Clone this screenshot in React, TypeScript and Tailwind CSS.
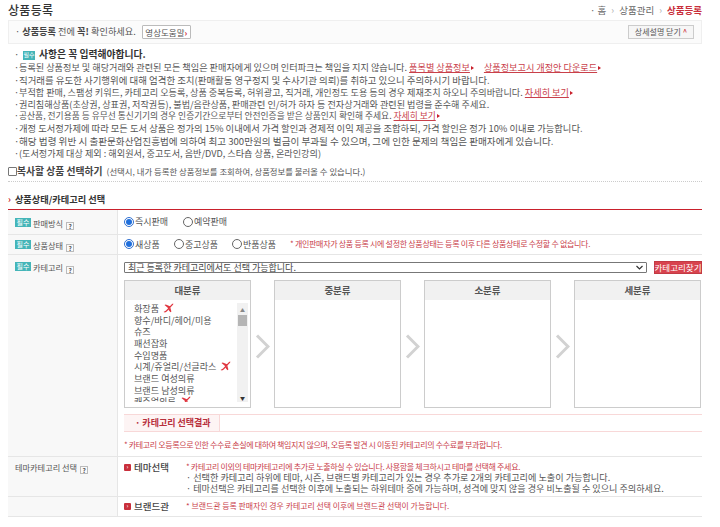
import React from 'react';

const FONT = "font-['Noto_Sans_CJK_KR','Noto_Sans',sans-serif]";

function Badge() {
    return <span className="inline-flex items-center justify-center w-[16px] h-[9px] mt-[0.5px] bg-[#45b5b8] text-white text-[7px] leading-none shrink-0">필수</span>;
}

function Help() {
    return <span className="inline-flex items-center justify-center w-[8px] h-[8px] border border-[#bbb] bg-[#fafafa] text-[6.5px] font-bold leading-none text-[#555] shrink-0">?</span>;
}

function Plane() {
    return (
        <svg width="11" height="10" viewBox="0 0 11 10" className="inline-block ml-[4px] align-[-1px]">
            <path d="M0.5 9 L3 7.5 L8.5 1.5 Q10 0.3 10.3 0.7 Q10.6 1.2 9.3 2.6 L3.8 8.4 L2 9.6 Z" fill="#e0353f" />
            <path d="M1.5 2 L2.8 1.6 L7.5 3.5 L5.6 5.6 Z M5.2 6.6 L7.3 4.6 L8.4 8.6 L7.4 9.2 Z" fill="#e0353f" />
        </svg>
    );
}

function Chevron() {
    return (
        <div className="w-[23px] flex justify-center shrink-0 mt-[5px]">
            <svg width="15" height="25" viewBox="0 0 15 25">
                <path d="M2 1.5 L13 12.5 L2 23.5" fill="none" stroke="#d2d2d2" strokeWidth="3" />
            </svg>
        </div>
    );
}

function Link({ children }: { children: React.ReactNode }) {
    return (
        <span className="text-[#c9404a] underline">
            {children}
            <span className="inline-block ml-[1px] w-0 h-0 border-y-[2.5px] border-y-transparent border-l-[3px] border-l-[#c9202c] align-[1px]" />
        </span>
    );
}

function RowLabel({ children, required, top }: { children: React.ReactNode; required?: boolean; top: string }) {
    return (
        <div className={`w-[110px] shrink-0 bg-[#f8f8f8] border-r border-[#e6e6e6] pl-[7px] flex items-start gap-[2px] text-[#555] text-[8.2px] ${top}`}>
            {required && <Badge />}
            <span className="leading-[10px] mr-[1px] whitespace-nowrap">{children}</span>
            <span className="mt-[1px]"><Help /></span>
        </div>
    );
}

function Radio({ label, checked, width }: { label: string; checked?: boolean; width: string }) {
    return (
        <span className={`inline-flex items-center gap-[1px] ${width}`}>
            <span className={`w-[10px] h-[10px] rounded-full border flex items-center justify-center ${checked ? 'border-[#2f6fd0]' : 'border-[#666]'}`}>
                {checked && <span className="w-[6px] h-[6px] rounded-full bg-[#1f6fdc]" />}
            </span>
            <span className="text-[#555] text-[9px]">{label}</span>
        </span>
    );
}

function CategoryBox({ title, items }: { title: string; items?: React.ReactNode[] }) {
    return (
        <div className="w-[127px] h-[128px] shrink-0 border border-[#ccc] flex flex-col">
            <div className="h-[19px] shrink-0 bg-[#f1f1f1] flex items-center justify-center font-bold text-[#555]">{title}</div>
            {items && (
                <div className="flex-1 flex min-h-0 pt-[3px] pb-[5px] pl-[9px] pr-[2px]">
                    <div className="flex-1 overflow-hidden text-[9.1px]">
                        {items.map((item, i) => (
                            <div key={i} className="h-[11.7px] leading-[11.7px] whitespace-nowrap text-[#555]">{item}</div>
                        ))}
                    </div>
                    <div className="w-[11px] bg-[#f1f1f1] flex flex-col items-center">
                        <span className="h-[7px] mt-[3px] text-[5px] leading-[7px] text-[#888]">▲</span>
                        <div className="w-[9px] h-[11px] mt-[2px] bg-[#b5b5b5]" />
                        <span className="mt-auto h-[9px] text-[5px] leading-[9px] text-[#333]">▼</span>
                    </div>
                </div>
            )}
        </div>
    );
}

const NOTICES: { size: string; body: React.ReactNode }[] = [
    { size: 'text-[9.15px]', body: <>등록된 상품정보 및 해당거래와 관련된 모든 책임은 판매자에게 있으며 인터파크는 책임을 지지 않습니다. <Link>품목별 상품정보</Link><span className="inline-block w-[10px]" /><Link>상품정보고시 개정안 다운로드</Link></> },
    { size: 'text-[9.45px]', body: <>직거래를 유도한 사기행위에 대해 엄격한 조치(판매활동 영구정지 및 수사기관 의뢰)를 취하고 있으니 주의하시기 바랍니다.</> },
    { size: 'text-[9.15px]', body: <>부적합 판매, 스팸성 키워드, 카테고리 오등록, 상품 중복등록, 허위광고, 직거래, 개인정도 도용 등의 경우 제재조치 하오니 주의바랍니다. <Link>자세히 보기</Link></> },
    { size: 'text-[9.15px]', body: <>권리침해상품(초상권, 상표권, 저작권등), 불법/음란상품, 판매관련 인/허가 하자 등 전자상거래와 관련된 법령을 준수해 주세요.</> },
    { size: 'text-[8.75px]', body: <>공산품, 전기용품 등 유무선 통신기기의 경우 인증기간으로부터 안전인증을 받은 상품인지 확인해 주세요. <Link>자세히 보기</Link></> },
    { size: 'text-[9.3px]', body: <>개정 도서정가제에 따라 모든 도서 상품은 정가의 15% 이내에서 가격 할인과 경제적 이익 제공을 조합하되, 가격 할인은 정가 10% 이내로 가능합니다.</> },
    { size: 'text-[9.6px]', body: <>해당 법령 위반 시 출판문화산업진흥법에 의하여 최고 300만원의 벌금이 부과될 수 있으며, 그에 인한 문제의 책임은 판매자에게 있습니다.</> },
    { size: 'text-[9.15px]', body: <>(도서정가제 대상 제외 : 해외원서, 중고도서, 음반/DVD, 스타숍 상품, 온라인강의)</> },
];

const CATEGORIES: React.ReactNode[] = [
    <>화장품<Plane /></>,
    '향수/바디/헤어/미용',
    '슈즈',
    '패션잡화',
    '수입명품',
    <>시계/쥬얼리/선글라스<Plane /></>,
    '브랜드 여성의류',
    '브랜드 남성의류',
    <>캐주얼의류<Plane /></>,
];

function ThemeTitle({ children }: { children: React.ReactNode }) {
    return (
        <div className="w-[62px] shrink-0 flex items-center gap-[3px] h-[11px] font-medium text-[#444] text-[9.5px]">
            <span className="w-[7px] h-[7px] bg-[#c9303c] rounded-[1px] flex items-center justify-center text-white text-[6px] leading-none">›</span>
            {children}
        </div>
    );
}

export default function App() {
    return (
        <div className={`${FONT} w-[720px] h-[527px] overflow-hidden bg-white text-[9.5px] text-[#555] pl-[8px] pr-[18px]`}>
            <div className="h-[20px] flex items-center justify-between">
                <h1 className="text-[12px] font-medium text-[#333] tracking-[0.3px]">상품등록</h1>
                <div className="flex items-center gap-[5px] text-[#666] mt-[1px]">
                    <span>· 홈</span>
                    <span className="text-[#aaa]">›</span>
                    <span>상품관리</span>
                    <span className="text-[#aaa]">›</span>
                    <span className="font-bold text-[#c9303c]">상품등록</span>
                </div>
            </div>

            <div className="h-[24px] bg-[#fbfbfb] border border-[#efefef] flex items-center justify-between pl-[6px] pr-[7px] text-[9.2px]">
                <div className="flex items-center">
                    <span>·&nbsp;</span>
                    <b className="text-[#444]">상품등록</b>
                    <span>&nbsp;전에&nbsp;</span>
                    <b className="text-[#444]">꼭!</b>
                    <span>&nbsp;확인하세요.</span>
                    <span className="ml-[6px] h-[14px] w-[49px] border border-[#bbb] rounded-[1px] bg-white flex items-center justify-center text-[8.5px]">
                        영상도움말<b className="text-[#c9202c]">›</b>
                    </span>
                </div>
                <span className="h-[14px] w-[66px] border border-[#ccc] bg-[#f6f6f6] flex items-center justify-center text-[8px]">상세설명 닫기 <span className="ml-[2px] text-[#c9202c]">^</span></span>
            </div>

            <div className="pt-[5px] pl-[6px]">
                <div className="h-[12.4px] flex items-center leading-none">
                    <span className="w-[9px]">·</span>
                    <span className="inline-flex items-center justify-center w-[12px] h-[9px] bg-[#45b5b8] text-white text-[6px] leading-none">필수</span>
                    <b className="ml-[4px] text-[#333] text-[9.8px]">사항은 꼭 입력해야합니다.</b>
                </div>
                {NOTICES.map((notice, i) => (
                    <div key={i} className={`h-[12.2px] leading-[12.2px] whitespace-nowrap ${notice.size}`}>
                        <span className="inline-block w-[5px]">·</span>{notice.body}
                    </div>
                ))}
            </div>

            <div className="mt-[5px] h-[15px] flex items-center border-b border-dotted border-[#ccc] pb-[2px] box-content">
                <span className="w-[9px] h-[9px] border border-[#777] rounded-[1px] bg-white shrink-0" />
                <b className="text-[#444] text-[9.8px]">복사할 상품 선택하기</b>
                <span className="ml-[4px] text-[8.4px]">(선택시, 내가 등록한 상품정보를 조회하여, 상품정보를 불러올 수 있습니다.)</span>
            </div>

            <div className="h-[18px] flex items-center text-[#333] font-bold text-[9.2px] border-b border-[#c9202c] mt-[9px] box-content">
                <span className="text-[#c9202c] mr-[4px] text-[9px] leading-none">›</span>상품상태/카테고리 선택
            </div>

            <div className="flex h-[25px] border-b border-[#e6e6e6]">
                <RowLabel required top="pt-[8px]">판매방식</RowLabel>
                <div className="flex items-center pl-[6px]">
                    <Radio label="즉시판매" checked width="w-[59px]" />
                    <Radio label="예약판매" width="w-[60px]" />
                </div>
            </div>

            <div className="flex h-[20px] border-b border-[#e6e6e6]">
                <RowLabel required top="pt-[5px]">상품상태</RowLabel>
                <div className="flex items-center pl-[6px]">
                    <Radio label="새상품" checked width="w-[50px]" />
                    <Radio label="중고상품" width="w-[58px]" />
                    <Radio label="반품상품" width="w-[58px]" />
                    <span className="text-[#c9404a] text-[8px] tracking-[-0.3px] whitespace-nowrap">* 개인판매자가 상품 등록 시에 설정한 상품상태는 등록 이후 다른 상품상태로 수정할 수 없습니다.</span>
                </div>
            </div>

            <div className="flex h-[202px] border-b border-[#e6e6e6]">
                <RowLabel required top="pt-[7px]">카테고리</RowLabel>
                <div className="flex-1 pl-[6px] pt-[6px]">
                    <div className="flex items-center gap-[7px] h-[13px]">
                        <div className="w-[523px] h-[11px] border border-[#777] rounded-[1px] flex items-center justify-between pl-[3px] pr-[3px] text-[#444] text-[9px]">
                            <span>최근 등록한 카테고리에서도 선택 가능합니다.</span>
                            <svg width="7" height="5" viewBox="0 0 7 5"><path d="M0.5 1 L3.5 4 L6.5 1" fill="none" stroke="#333" strokeWidth="1.2" /></svg>
                        </div>
                        <span className="w-[48px] h-[13px] bg-[#d8434e] border border-[#c23a44] text-white text-[8.5px] flex items-center justify-center whitespace-nowrap">카테고리찾기</span>
                    </div>
                    <div className="flex items-center mt-[6px]">
                        <CategoryBox title="대분류" items={CATEGORIES} />
                        <Chevron />
                        <CategoryBox title="중분류" />
                        <Chevron />
                        <CategoryBox title="소분류" />
                        <Chevron />
                        <CategoryBox title="세분류" />
                    </div>
                    <div className="flex h-[18px] mt-[6px] border-y border-[#f8d8d8]">
                        <div className="w-[96px] bg-[#fdf4f4] border-r border-[#f8d8d8] flex items-center pl-[11px] font-bold text-[#b8303c] text-[9px] whitespace-nowrap">· 카테고리 선택결과</div>
                    </div>
                    <div className="text-[#c9404a] text-[8px] tracking-[-0.37px] mt-[7px] leading-[12px] whitespace-nowrap">* 카테고리 오등록으로 인한 수수료 손실에 대하여 책임지지 않으며, 오등록 발견 시 이동된 카테고리의 수수료를 부과합니다.</div>
                </div>
            </div>

            <div className="flex h-[40px] border-b border-[#e6e6e6]">
                <RowLabel top="pt-[5px]">테마카테고리 선택</RowLabel>
                <div className="flex-1 flex pl-[6px] pt-[5px]">
                    <ThemeTitle>테마선택</ThemeTitle>
                    <div className="leading-[10.5px] whitespace-nowrap">
                        <div className="text-[#c9404a] text-[8px] tracking-[-0.33px]">* 카테고리 이외의 테마카테고리에 추가로 노출하실 수 있습니다. 사용함을 체크하시고 테마를 선택해 주세요.</div>
                        <div className="text-[9.15px]">· 선택한 카테고리 하위에 테마, 시즌, 브랜드별 카테고리가 있는 경우 추가로 2개의 카테고리에 노출이 가능합니다.</div>
                        <div className="text-[9.1px]">· 테마선택은 카테고리를 선택한 이후에 노출되는 하위테마 중에 가능하며, 성격에 맞지 않을 경우 비노출될 수 있으니 주의하세요.</div>
                    </div>
                </div>
            </div>

            <div className="flex h-[20px] border-b border-[#e6e6e6]">
                <div className="w-[110px] shrink-0 bg-[#f8f8f8] border-r border-[#e6e6e6]" />
                <div className="flex-1 flex items-center pl-[6px]">
                    <ThemeTitle>브랜드관</ThemeTitle>
                    <span className="text-[#c9404a] text-[7.9px] whitespace-nowrap">* 브랜드관 등록 판매자인 경우 카테고리 선택 이후에 브랜드관 선택이 가능합니다.</span>
                </div>
            </div>
        </div>
    );
}
